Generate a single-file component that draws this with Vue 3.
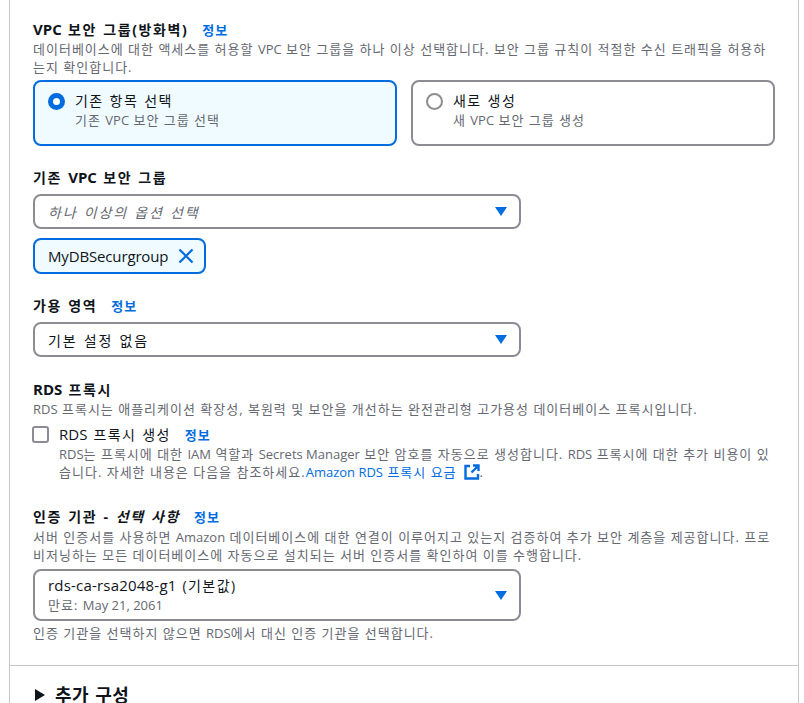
<script setup>
const cards = [
  { pre: '기존 항목 선택', a: '기존 ', b: ' 보안 그룹 선택', on: true },
  { pre: '새로 생성', a: '새 ', b: ' 보안 그룹 생성', on: false },
]
</script>

<template>
  <div class="page">
    <div class="panel">
      <section class="s1">
        <h3 class="label"><span class="en">VPC</span> 보안 그룹(방화벽)<a class="info">정보</a></h3>
        <p class="desc">데이터베이스에 대한 액세스를 허용할 <span class="en">VPC</span> 보안 그룹을 하나 이상 선택합니다. 보안 그룹 규칙이 적절한 수신 트래픽을 허용하<br>는지 확인합니다.</p>
        <div class="cards">
          <div v-for="c in cards" :key="c.pre" class="card" :class="{ on: c.on }">
            <span class="radio"></span>
            <div>
              <div class="ct">{{ c.pre }}</div>
              <div class="cs desc">{{ c.a }}<span class="en">VPC</span>{{ c.b }}</div>
            </div>
          </div>
        </div>
      </section>

      <section class="s2">
        <h3 class="label">기존 <span class="en">VPC</span> 보안 그룹</h3>
        <div class="select ph">
          <span>하나 이상의 옵션 선택</span>
          <svg class="caret" viewBox="0 0 12 9"><path d="M0 0h12L6 9z" /></svg>
        </div>
        <div class="token">
          <span class="en tok">MyDBSecurgroup</span>
          <svg class="x" viewBox="0 0 16 16"><path d="M1.5 1.5l13 13M14.5 1.5l-13 13" /></svg>
        </div>
      </section>

      <section class="s3">
        <h3 class="label">가용 영역<a class="info">정보</a></h3>
        <div class="select">
          <span>기본 설정 없음</span>
          <svg class="caret" viewBox="0 0 12 9"><path d="M0 0h12L6 9z" /></svg>
        </div>
      </section>

      <section class="s4">
        <h3 class="label"><span class="en">RDS</span> 프록시</h3>
        <p class="desc"><span class="en">RDS</span> 프록시는 애플리케이션 확장성, 복원력 및 보안을 개선하는 완전관리형 고가용성 데이터베이스 프록시입니다.</p>
        <div class="check">
          <span class="box"></span>
          <div>
            <div class="cl"><span class="en">RDS</span> 프록시 생성<a class="info">정보</a></div>
            <p class="desc sub"><span class="en">RDS</span>는 프록시에 대한 <span class="en">IAM</span> 역할과 <span class="en">Secrets Manager</span> 보안 암호를 자동으로 생성합니다. <span class="en">RDS</span> 프록시에 대한 추가 비용이 있<br>습니다. 자세한 내용은 다음을 참조하세요.<a class="link"><span class="en">Amazon RDS</span> 프록시 요금<svg class="ext" viewBox="0 0 16 16"><path d="M6 2H1.5v12.5H14V10M9 1.5h5.5V7M14 2L7.5 8.5" /></svg></a>.</p>
          </div>
        </div>
      </section>

      <section class="s5">
        <h3 class="label">인증 기관 - <em>선택 사항</em><a class="info">정보</a></h3>
        <p class="desc lead">서버 인증서를 사용하면 <span class="en">Amazon</span> 데이터베이스에 대한 연결이 이루어지고 있는지 검증하여 추가 보안 계층을 제공합니다. 프로<br>비저닝하는 모든 데이터베이스에 자동으로 설치되는 서버 인증서를 확인하여 이를 수행합니다.</p>
        <div class="select tall">
          <div>
            <div class="val"><span class="en">rds-ca-rsa2048-g1</span> (기본값)</div>
            <div class="desc exp">만료: <span class="en">May 21, 2061</span></div>
          </div>
          <svg class="caret" viewBox="0 0 12 9"><path d="M0 0h12L6 9z" /></svg>
        </div>
        <p class="desc hint">인증 기관을 선택하지 않으면 <span class="en">RDS</span>에서 대신 인증 기관을 선택합니다.</p>
      </section>

      <div class="more">
        <svg class="tri" viewBox="0 0 10 12"><path d="M0 0l10 6-10 6z" /></svg>
        <span>추가 구성</span>
      </div>
    </div>
  </div>
</template>

<style>
html, body { margin: 0; background: #fff; overflow: hidden; }
</style>

<style scoped>
.page {
  width: 804px;
  height: 703px;
  overflow: hidden;
  background: #fff;
  font-family: "Open Sans", "Noto Sans CJK KR", sans-serif;
  font-size: 14px;
  letter-spacing: 1.4px;
  word-spacing: 1px;
  color: #0f141a;
}
.en {
  font-size: 15px;
  line-height: 1;
  letter-spacing: 0;
  word-spacing: 0;
}
.panel {
  box-sizing: border-box;
  width: 790px;
  margin-left: 9px;
  height: 703px;
  border-left: 1px solid #c6c6cd;
  border-right: 1px solid #c6c6cd;
  padding: 20px 22px 0 23px;
}
section { width: 743px; }
.label {
  margin: 0;
  font-size: 14px;
  line-height: 20px;
  letter-spacing: 1.6px;
  font-weight: 700;
  white-space: nowrap;
}
.label em { font-style: italic; }
.info {
  margin-left: 14px;
  font-size: 13px;
  line-height: 1;
  letter-spacing: 1px;
  font-weight: 700;
  color: #006ce0;
}
.desc {
  margin: 0;
  font-size: 13px;
  line-height: 18px;
  letter-spacing: 1px;
  word-spacing: 0;
  color: #656871;
  white-space: nowrap;
}
.desc .en { font-size: 13px; }
.cards {
  display: flex;
  gap: 14px;
  margin-top: 4px;
}
.card {
  box-sizing: border-box;
  width: 364px;
  height: 66px;
  border: 2px solid #8c8c94;
  border-radius: 8px;
  padding: 9px 13px;
  display: flex;
  gap: 10px;
}
.card.on { border-color: #006ce0; background: #f0fbff; }
.radio {
  box-sizing: border-box;
  width: 17px;
  height: 17px;
  margin: 2px 0 0;
  border: 2px solid #8c8c94;
  border-radius: 50%;
  background: #fff;
  flex: none;
}
.on .radio { border: 5px solid #006ce0; }
.ct { font-size: 14px; line-height: 20px; }
.cs { margin-top: 0; }
.s2 { margin-top: 22px; }
.select {
  box-sizing: border-box;
  width: 488px;
  height: 35px;
  margin-top: 6px;
  border: 2px solid #8c8c94;
  border-radius: 8px;
  padding: 0 13px;
  display: flex;
  align-items: center;
  justify-content: space-between;
  letter-spacing: 1.8px;
}
.ph { color: #656871; font-style: italic; }
.caret { width: 12px; height: 9px; fill: #006ce0; margin-right: -1px; flex: none; }
.token {
  box-sizing: border-box;
  width: 173px;
  height: 36px;
  margin-top: 9px;
  border: 2px solid #006ce0;
  border-radius: 8px;
  background: #f0fbff;
  padding: 0 10px 0 13px;
  display: flex;
  align-items: center;
  justify-content: space-between;
}
.tok { letter-spacing: -0.15px; }
.x { width: 16px; height: 16px; fill: none; stroke: #006ce0; stroke-width: 2.2; }
.s3 { margin-top: 22px; }
.s4 { margin-top: 23px; }
.check { display: flex; gap: 10px; margin-top: 8px; }
.box {
  box-sizing: border-box;
  width: 17px;
  height: 17px;
  margin-left: -1px;
  border: 2px solid #8c8c94;
  border-radius: 3px;
  flex: none;
}
.cl { line-height: 18px; }
.sub { margin-top: 1px; }
.link { color: #006ce0; }
.ext { width: 16px; height: 16px; margin-left: 7px; vertical-align: -3px; fill: none; stroke: #006ce0; stroke-width: 2.4; }
.s5 { margin-top: 26px; }
.lead { margin-top: 1px; }
.tall { height: 52px; margin-top: 5px; }
.val { line-height: 20px; letter-spacing: 1.4px; }
.val .en { letter-spacing: 0.2px; }
.hint { margin-top: 3px; }
.more {
  margin: 23px -22px 0 -23px;
  border-top: 1px solid #c6c6cd;
  padding: 17px 0 0 25px;
  display: flex;
  align-items: center;
  gap: 10px;
  font-size: 18px;
  letter-spacing: 0.5px;
  line-height: 24px;
  font-weight: 700;
}
.tri { width: 10px; height: 12px; fill: #0f141a; }
</style>
